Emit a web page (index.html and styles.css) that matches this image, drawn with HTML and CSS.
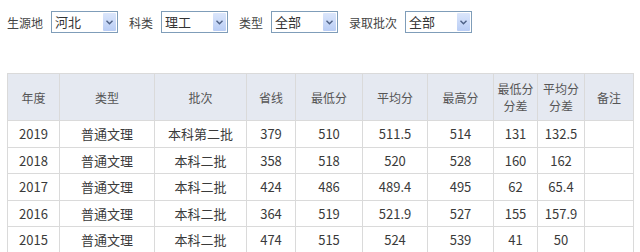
FILE: index.html
```html
<!DOCTYPE html>
<html lang="zh">
<head>
<meta charset="utf-8">
<link rel="stylesheet" href="styles.css">
</head>
<body>
<div class="page">
  <div class="filters">
    <span class="label">生源地</span>
    <div class="select"><span class="val">河北</span><span class="btn"><svg width="7" height="5" viewBox="0 0 7 5"><path d="M0.5 0.8 L3.5 3.8 L6.5 0.8" fill="none" stroke="#4d6185" stroke-width="1.4"/></svg></span></div>
    <span class="label">科类</span>
    <div class="select"><span class="val">理工</span><span class="btn"><svg width="7" height="5" viewBox="0 0 7 5"><path d="M0.5 0.8 L3.5 3.8 L6.5 0.8" fill="none" stroke="#4d6185" stroke-width="1.4"/></svg></span></div>
    <span class="label">类型</span>
    <div class="select"><span class="val">全部</span><span class="btn"><svg width="7" height="5" viewBox="0 0 7 5"><path d="M0.5 0.8 L3.5 3.8 L6.5 0.8" fill="none" stroke="#4d6185" stroke-width="1.4"/></svg></span></div>
    <span class="label">录取批次</span>
    <div class="select"><span class="val">全部</span><span class="btn"><svg width="7" height="5" viewBox="0 0 7 5"><path d="M0.5 0.8 L3.5 3.8 L6.5 0.8" fill="none" stroke="#4d6185" stroke-width="1.4"/></svg></span></div>
  </div>
  <table class="scores">
    <colgroup>
      <col class="c1"><col class="c2"><col class="c3"><col class="c4"><col class="c5"><col class="c6"><col class="c7"><col class="c8"><col class="c9"><col class="c10">
    </colgroup>
    <thead>
      <tr><th>年度</th><th>类型</th><th>批次</th><th>省线</th><th>最低分</th><th>平均分</th><th>最高分</th><th>最低分<br>分差</th><th>平均分<br>分差</th><th>备注</th></tr>
    </thead>
    <tbody>
      <tr><td>2019</td><td>普通文理</td><td>本科第二批</td><td>379</td><td>510</td><td>511.5</td><td>514</td><td>131</td><td>132.5</td><td></td></tr>
      <tr><td>2018</td><td>普通文理</td><td>本科二批</td><td>358</td><td>518</td><td>520</td><td>528</td><td>160</td><td>162</td><td></td></tr>
      <tr><td>2017</td><td>普通文理</td><td>本科二批</td><td>424</td><td>486</td><td>489.4</td><td>495</td><td>62</td><td>65.4</td><td></td></tr>
      <tr><td>2016</td><td>普通文理</td><td>本科二批</td><td>364</td><td>519</td><td>521.9</td><td>527</td><td>155</td><td>157.9</td><td></td></tr>
      <tr><td>2015</td><td>普通文理</td><td>本科二批</td><td>474</td><td>515</td><td>524</td><td>539</td><td>41</td><td>50</td><td></td></tr>
    </tbody>
  </table>
</div>
</body>
</html>
```
FILE: styles.css
```css
html, body {
  margin: 0;
  padding: 0;
  background: #fff;
}
.page {
  padding: 11px 7px 0 7px;
  font-family: "Microsoft YaHei", "Noto Sans CJK SC", sans-serif;
  color: #444;
}
.filters {
  display: flex;
  align-items: center;
  height: 22px;
  font-size: 12px;
}
.label {
  color: #444;
  margin-right: 8px;
}
.select {
  display: flex;
  align-items: stretch;
  width: 65px;
  height: 20px;
  border: 1px solid #7f9db9;
  background: #fff;
  margin-right: 11px;
  box-sizing: content-box;
}
.val {
  flex: 1;
  padding-left: 3px;
  font-size: 13px;
  line-height: 20px;
  color: #333;
}
.btn {
  width: 13px;
  margin: 1px;
  background: linear-gradient(#dbe6fb, #b9cdf5);
  border-radius: 1px;
  display: flex;
  align-items: center;
  justify-content: center;
}
.scores {
  margin-top: 40px;
  border-collapse: collapse;
  table-layout: fixed;
  width: 627px;
  font-size: 13px;
}
.c1 { width: 52px; }
.c2 { width: 95px; }
.c3 { width: 92px; }
.c4 { width: 49px; }
.c5 { width: 67px; }
.c6 { width: 65px; }
.c7 { width: 66px; }
.c8 { width: 44px; }
.c9 { width: 47px; }
.c10 { width: 49px; }
.scores th, .scores td {
  border: 1px solid #dadada;
  text-align: center;
  padding: 0;
}
.scores th {
  background: #e5e9f1;
  font-weight: normal;
  color: #555;
  font-size: 12px;
  line-height: 17px;
  height: 46px;
}
.scores td {
  height: 25.5px;
  color: #3a3a3a;
}
```
